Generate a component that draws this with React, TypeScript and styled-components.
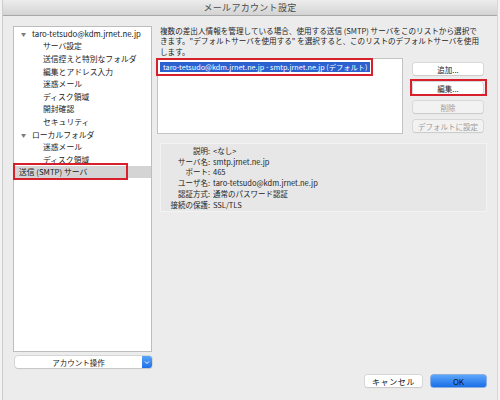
import React from "react";
import styled, { createGlobalStyle } from "styled-components";

const Global = createGlobalStyle`
  html, body { margin: 0; padding: 0; background: #f0f0f0; }
  body { font-family: "Noto Sans CJK JP", "Noto Sans", sans-serif; }
  #root { width: 500px; height: 400px; }
`;

const Screen = styled.div`
  width: 500px;
  height: 400px;
  display: flex;
  padding: 0 2px;
  box-sizing: border-box;
  background: #f3f3f3;
`;

const Window = styled.div`
  flex: 1;
  display: flex;
  flex-direction: column;
  background: #ececec;
  border-left: 1px solid #cdcdcd;
  border-right: 1px solid #d8d8d8;
`;

const TitleBar = styled.div`
  height: 15px;
  flex: 0 0 15px;
  background: linear-gradient(#ededed, #d3d3d3);
  border-bottom: 1px solid #a8a8a8;
  display: flex;
  align-items: center;
  justify-content: center;
  font-size: 9px;
  color: #4a4a4a;
  letter-spacing: 0.3px;
`;

const Body = styled.div`
  display: flex;
  padding: 10px 0 0 10px;
  gap: 5px;
`;

const LeftColumn = styled.div`
  width: 139px;
  display: flex;
  flex-direction: column;
  gap: 4px;
`;

const Tree = styled.div`
  position: relative;
  height: 326px;
  box-sizing: border-box;
  background: #fff;
  border: 1px solid #bdbdbd;
`;

const TreeRow = styled.div<{ $depth: number; $selected?: boolean }>`
  height: 12.6px;
  display: flex;
  align-items: center;
  font-size: 7.8px;
  color: #1a1a1a;
  padding-left: ${(p) => (p.$depth === 0 ? 6 : p.$depth === 1 ? 29 : 5)}px;
  background: ${(p) => (p.$selected ? "#d4d4d4" : "transparent")};
  white-space: nowrap;
`;

const Twisty = styled.span`
  display: inline-block;
  width: 11px;
  font-size: 5px;
  color: #7a7a7a;
  margin-left: 1px;
`;

const Annot = styled.div<{ $l: number; $t: number; $w: number; $h: number }>`
  position: absolute;
  left: ${(p) => p.$l}px;
  top: ${(p) => p.$t}px;
  width: ${(p) => p.$w}px;
  height: ${(p) => p.$h}px;
  box-sizing: border-box;
  border: 2.5px solid #d7202b;
  pointer-events: none;
`;

const Dropdown = styled.div`
  height: 12px;
  margin-left: 2px;
  display: flex;
  background: #fff;
  border-radius: 3px;
  box-shadow: 0 0 0 0.5px #c4c4c4, 0 0.5px 1px rgba(0,0,0,0.15);
  overflow: hidden;
`;

const DropLabel = styled.div`
  flex: 1;
  display: flex;
  align-items: center;
  justify-content: center;
  font-size: 7.5px;
  color: #222;
`;

const DropArrow = styled.div`
  width: 10px;
  background: linear-gradient(#5aa4f8, #1c6fe6);
  display: flex;
  align-items: center;
  justify-content: center;
`;

const RightColumn = styled.div`
  width: 330px;
  display: flex;
  flex-direction: column;
`;

const Description = styled.div`
  margin-left: 3px;
  font-size: 7.6px;
  line-height: 10.4px;
  color: #1e1e1e;
  height: 32px;
  white-space: nowrap;
`;

const ListRow = styled.div`
  display: flex;
  gap: 10px;
  position: relative;
`;

const List = styled.div`
  width: 246px;
  height: 76px;
  box-sizing: border-box;
  background: #fff;
  border: 1px solid #c4c4c4;
  padding: 3px 2px;
`;

const ListItem = styled.div`
  height: 10px;
  background: #2c62cf;
  color: #fff;
  font-size: 7.25px;
  display: flex;
  align-items: center;
  padding: 0 3px;
  width: fit-content;
  white-space: nowrap;
`;

const ButtonCol = styled.div`
  position: relative;
  width: 70px;
  margin-top: 5px;
  display: flex;
  flex-direction: column;
  gap: 7px;
`;

const SideButton = styled.div<{ $disabled?: boolean }>`
  height: 12px;
  border-radius: 2px;
  background: ${(p) => (p.$disabled ? "#f2f2f2" : "#fff")};
  box-shadow: 0 0 0 0.5px #c8c8c8, 0 0.5px 1px rgba(0,0,0,0.12);
  display: flex;
  align-items: center;
  justify-content: center;
  font-size: 7.5px;
  color: ${(p) => (p.$disabled ? "#9a9a9a" : "#222")};
`;

const Details = styled.div`
  margin: 9px 0 0 3px;
  width: 327px;
  box-sizing: border-box;
  padding: 2px 0 1px 3px;
  background: #e7e7e7;
  border: 1px solid #f3f3f3;
  display: grid;
  grid-template-columns: 46px 1fr;
  column-gap: 3px;
  font-size: 7.5px;
  line-height: 10.7px;
  color: #1e1e1e;
`;

const Label = styled.div`
  text-align: right;
  white-space: nowrap;
`;

const Value = styled.div`
  white-space: nowrap;
`;

const Footer = styled.div`
  display: flex;
  justify-content: flex-end;
  gap: 9px;
  padding-right: 11px;
  margin-top: 7px;
`;

const FooterButton = styled.div<{ $primary?: boolean }>`
  width: ${(p) => (p.$primary ? 55 : 57)}px;
  height: 12px;
  border-radius: 2px;
  display: flex;
  align-items: center;
  justify-content: center;
  font-size: 8px;
  letter-spacing: ${(p) => (p.$primary ? 0 : 0.6)}px;
  color: #111;
  background: ${(p) => (p.$primary ? "linear-gradient(#5aa6fa, #1b6ee8)" : "#fff")};
  box-shadow: ${(p) =>
    p.$primary ? "0 0 0 0.5px #2f73d8" : "0 0 0 0.5px #c6c6c6, 0 0.5px 1px rgba(0,0,0,0.12)"};
`;

const treeItems: { text: string; depth: number; twisty?: boolean; selected?: boolean }[] = [
  { text: "taro-tetsudo@kdm.jrnet.ne.jp", depth: 0, twisty: true },
  { text: "サーバ設定", depth: 1 },
  { text: "送信控えと特別なフォルダ", depth: 1 },
  { text: "編集とアドレス入力", depth: 1 },
  { text: "迷惑メール", depth: 1 },
  { text: "ディスク領域", depth: 1 },
  { text: "開封確認", depth: 1 },
  { text: "セキュリティ", depth: 1 },
  { text: "ローカルフォルダ", depth: 0, twisty: true },
  { text: "迷惑メール", depth: 1 },
  { text: "ディスク領域", depth: 1 },
  { text: "送信 (SMTP) サーバ", depth: 2, selected: true },
];

const details: [string, string][] = [
  ["説明:", "<なし>"],
  ["サーバ名:", "smtp.jrnet.ne.jp"],
  ["ポート:", "465"],
  ["ユーザ名:", "taro-tetsudo@kdm.jrnet.ne.jp"],
  ["認証方式:", "通常のパスワード認証"],
  ["接続の保護:", "SSL/TLS"],
];

const descLines = [
  "複数の差出人情報を管理している場合、使用する送信 (SMTP) サーバをこのリストから選択で",
  "きます。\"デフォルトサーバを使用する\" を選択すると、このリストのデフォルトサーバを使用",
  "します。",
];

export default function App() {
  return (
    <>
      <Global />
      <Screen>
        <Window>
          <TitleBar>メールアカウント設定</TitleBar>
          <Body>
            <LeftColumn>
              <Tree>
                {treeItems.map((it, i) => (
                  <TreeRow key={i} $depth={it.depth} $selected={it.selected}>
                    {it.twisty && <Twisty>▼</Twisty>}
                    {it.text}
                  </TreeRow>
                ))}
                <Annot $l={-1} $t={136} $w={115} $h={17} />
              </Tree>
              <Dropdown>
                <DropLabel>アカウント操作</DropLabel>
                <DropArrow>
                  <svg width="6" height="5" viewBox="0 0 6 5">
                    <path d="M1 1.5 L3 3.5 L5 1.5" stroke="#fff" strokeWidth="1" fill="none" />
                  </svg>
                </DropArrow>
              </Dropdown>
            </LeftColumn>
            <RightColumn>
              <Description>
                {descLines.map((l, i) => (
                  <React.Fragment key={i}>
                    {l}
                    {i < descLines.length - 1 && <br />}
                  </React.Fragment>
                ))}
              </Description>
              <ListRow>
                <List>
                  <ListItem>taro-tetsudo@kdm.jrnet.ne.jp - smtp.jrnet.ne.jp (デフォルト)</ListItem>
                </List>
                <Annot $l={-1} $t={0} $w={217} $h={18} />
                <ButtonCol>
                  <SideButton>追加...</SideButton>
                  <SideButton>編集...</SideButton>
                  <SideButton $disabled>削除</SideButton>
                  <SideButton $disabled>デフォルトに設定</SideButton>
                  <Annot $l={-3} $t={16} $w={77} $h={17} />
                </ButtonCol>
              </ListRow>
              <Details>
                {details.map(([l, v]) => (
                  <React.Fragment key={l}>
                    <Label>{l}</Label>
                    <Value>{v}</Value>
                  </React.Fragment>
                ))}
              </Details>
            </RightColumn>
          </Body>
          <Footer>
            <FooterButton>キャンセル</FooterButton>
            <FooterButton $primary>OK</FooterButton>
          </Footer>
        </Window>
      </Screen>
    </>
  );
}
